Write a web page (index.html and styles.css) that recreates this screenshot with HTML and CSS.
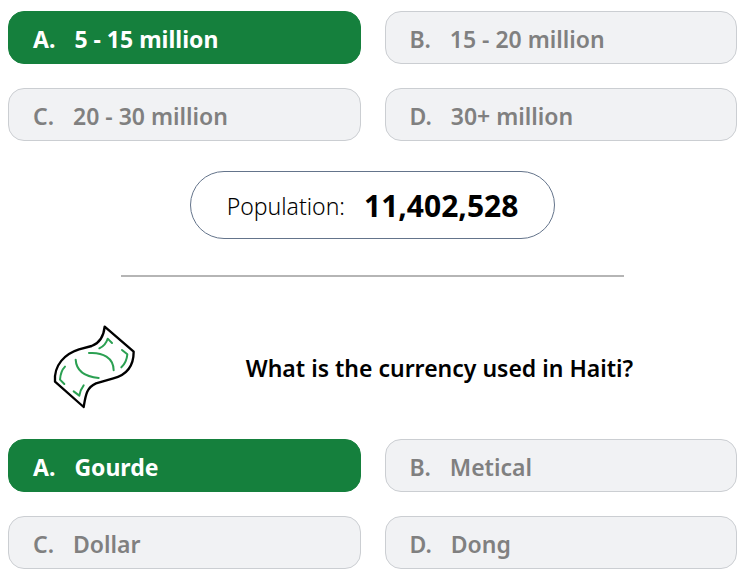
FILE: index.html
```
<!DOCTYPE html>
<html lang="en">
<head>
  <meta charset="utf-8">
  <title>Country Quiz</title>
  <link rel="stylesheet" href="styles.css">
</head>
<body>
  <div class="answers">
    <button class="answer correct"><span>A.</span>5 - 15 million</button>
    <button class="answer" disabled><span>B.</span>15 - 20 million</button>
    <button class="answer" disabled><span>C.</span>20 - 30 million</button>
    <button class="answer" disabled><span>D.</span>30+ million</button>
  </div>

  <div class="result">
    <span>Population:</span>
    <strong>11,402,528</strong>
  </div>

  <hr>

  <div class="question">
    <svg class="icon" viewBox="0 0 330 315" fill="none" stroke-linecap="round" stroke-linejoin="round">
      <path stroke="#000" stroke-width="7" d="M194 35L281 110C281 155 258 180 220 190L168 205C139 218 137 240 131 276L45 200C41 150 75 116 117 103L155 93C180 84 191 65 194 35Z"/>
      <g stroke="#2ba052" stroke-width="6">
        <path d="M147 114C188 111 221 128 221 166"/>
        <path d="M107 134C109 169 133 185 176 189"/>
        <path d="M178 100Q197 91 203 71L216 84"/>
        <path d="M246 105L262 118Q260 142 244 157"/>
        <path d="M75 155Q62 168 60 194L73 207"/>
        <path d="M131 211Q121 224 118 242L101 229"/>
      </g>
    </svg>
    <h2>What is the currency used in Haiti?</h2>
  </div>

  <div class="answers">
    <button class="answer correct"><span>A.</span>Gourde</button>
    <button class="answer" disabled><span>B.</span>Metical</button>
    <button class="answer" disabled><span>C.</span>Dollar</button>
    <button class="answer" disabled><span>D.</span>Dong</button>
  </div>
</body>
</html>
```
FILE: styles.css
```
body {
  margin: 0;
  padding: 11px 7px 0 8px;
  background-color: #fff;
  color: #000;
  font-family: "Segoe UI", "Noto Sans", "Open Sans", sans-serif;
}

.answers {
  display: grid;
  grid-template-columns: 1fr 1fr;
  gap: 24px;
}

.answer {
  display: flex;
  align-items: center;
  gap: 19px;
  padding: 10px 24px 6px;
  border: 1px solid #cbced2;
  border-radius: 16px;
  background-color: #f1f2f4;
  color: #808080;
  font-family: inherit;
  font-size: 23px;
  font-weight: 600;
  line-height: 35px;
  text-align: left;
}

.answer.correct {
  border-color: #15803d;
  background-color: #15803d;
  color: #fff;
  font-weight: 700;
}

.result {
  display: flex;
  align-items: center;
  justify-content: center;
  gap: 19px;
  width: fit-content;
  margin: 30px auto 36px;
  padding: 15px 36px 13px;
  border: 1px solid #64748b;
  border-radius: 34px;
  font-size: 23px;
  font-weight: 300;
  line-height: 38px;
}

.result strong {
  font-size: 30px;
  font-weight: 700;
}

hr {
  width: 69%;
  height: 2px;
  margin: 0 auto;
  border: 0;
  background-color: #b5b5b5;
}

.question {
  display: flex;
  align-items: center;
  margin: 38px 0 19px;
  padding: 0 8px 0 32px;
}

.icon {
  width: 110px;
  height: 105px;
}

h2 {
  flex: 1;
  margin: 0;
  font-size: 23px;
  font-weight: 600;
  text-align: center;
}
```
